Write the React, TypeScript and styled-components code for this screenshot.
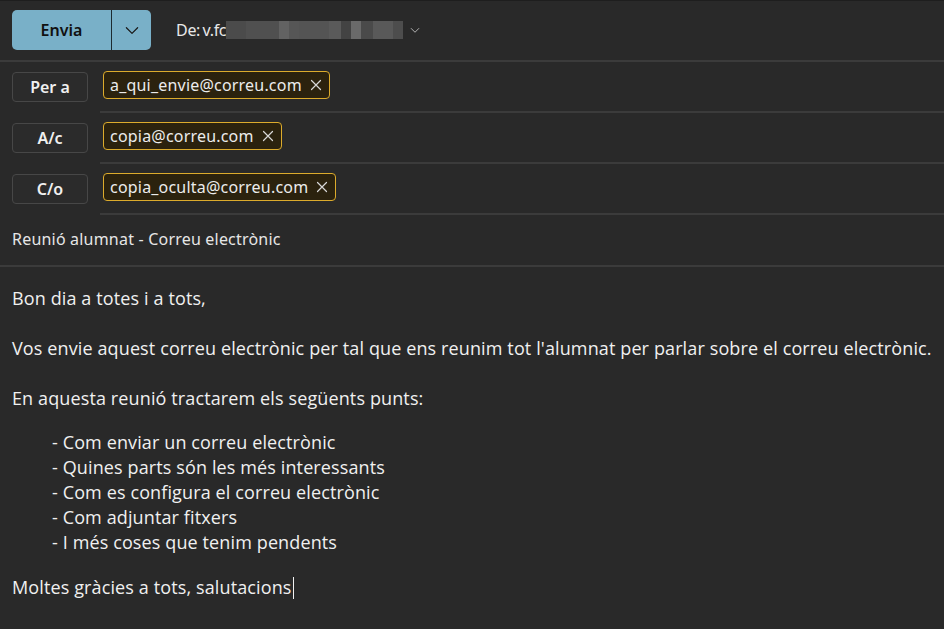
import { createGlobalStyle, styled } from 'styled-components';

const GlobalStyle = createGlobalStyle`
  html, body {
    margin: 0;
    padding: 0;
    background: #292929;
  }
  * {
    box-sizing: border-box;
  }
`;

const HEAD_FONT = `"Noto Sans", "Open Sans", sans-serif`;
const BODY_FONT = `"Open Sans", "Noto Sans", sans-serif`;

const Window = styled.main`
  width: 944px;
  height: 629px;
  overflow: hidden;
  background: #292929;
  border-top: 1px solid #1e1e1e;
  color: #e6e6e6;
  font-family: ${HEAD_FONT};
`;

const Toolbar = styled.header`
  height: 61px;
  display: flex;
  align-items: center;
  gap: 25px;
  padding: 0 12px 1px;
  border-bottom: 2px solid #3b3b3b;
`;

const SendGroup = styled.div`
  display: flex;
  height: 40px;
  border-radius: 5px;
  overflow: hidden;
  background: #79b0c8;
`;

const SendButton = styled.button`
  width: 99px;
  border: 0;
  background: transparent;
  color: #111;
  font-family: ${HEAD_FONT};
  font-size: 16px;
  font-weight: 600;
  padding: 0;
`;

const SendMenu = styled.button`
  width: 40px;
  border: 0;
  border-left: 1px solid #1c2a30;
  background: transparent;
  display: flex;
  align-items: center;
  justify-content: center;
  padding: 0;
`;

const From = styled.div`
  display: flex;
  align-items: center;
  font-size: 16px;
  color: #e8e8e8;
  letter-spacing: -0.3px;
`;

const Redacted = styled.span`
  display: flex;
  height: 18px;
  margin-right: 6px;
`;

const Block = styled.span<{ $w: number; $c: string }>`
  width: ${(p) => p.$w}px;
  background: ${(p) => p.$c};
`;

const Row = styled.div`
  display: flex;
  align-items: center;
  height: 51px;
  padding-left: 12px;
`;

const Field = styled.div`
  flex: 1;
  height: 100%;
  display: flex;
  align-items: center;
  margin-left: 12px;
  border-bottom: 2px solid #3b3b3b;
`;

const RecipientLabel = styled.button`
  width: 76px;
  height: 30px;
  margin-top: -2px;
  border: 1px solid #474747;
  border-radius: 4px;
  background: #2b2b2b;
  color: #f0f0f0;
  font-family: ${HEAD_FONT};
  font-size: 16px;
  font-weight: 600;
  padding: 0;
`;

const Chip = styled.span`
  display: inline-flex;
  align-items: center;
  gap: 8px;
  height: 28px;
  margin-left: 3px;
  margin-top: -4px;
  padding: 0 7px 0 6px;
  border: 1px solid #dcab2c;
  border-radius: 4px;
  background: #2b220e;
  color: #ececec;
  font-size: 16px;
  letter-spacing: 0.2px;
`;

const Subject = styled.div`
  height: 52px;
  display: flex;
  align-items: center;
  padding: 0 12px 2px;
  border-bottom: 2px solid #3b3b3b;
  font-size: 16px;
  color: #e6e6e6;
  letter-spacing: 0.2px;
`;

const Body = styled.section`
  padding: 19px 12px 0;
  font-family: ${BODY_FONT};
  font-size: 18px;
  line-height: 25px;
  color: #f0f0f0;
  letter-spacing: 0.12px;
  white-space: nowrap;
`;

const Paragraph = styled.p`
  margin: 0 0 25px;
`;

const List = styled.ul`
  list-style: none;
  margin: -6px 0 20px;
  padding-left: 40px;
`;

const Caret = styled.span`
  display: inline-block;
  width: 1px;
  height: 22px;
  margin-left: 1px;
  vertical-align: -5px;
  background: #f0f0f0;
`;

const Chevron = ({ size, color }: { size: number; color: string }) => (
  <svg width={size} height={size} viewBox="0 0 16 16" fill="none">
    <path d="M3 6l5 5 5-5" stroke={color} strokeWidth="1.1" strokeLinecap="round" strokeLinejoin="round" />
  </svg>
);

const Dismiss = () => (
  <svg width="12" height="12" viewBox="0 0 12 12" fill="none">
    <path d="M1.5 1.5l9 9M10.5 1.5l-9 9" stroke="#d8d8d8" strokeWidth="1.2" strokeLinecap="round" />
  </svg>
);

const BLOCKS: [number, string][] = [
  [20, '#4b4b4b'],
  [33, '#505050'],
  [10, '#626262'],
  [10, '#565656'],
  [30, '#545454'],
  [12, '#5a5a5a'],
  [10, '#434343'],
  [10, '#6a6a6a'],
  [12, '#4a4a4a'],
  [20, '#595959'],
  [10, '#4d4d4d'],
];

const RECIPIENTS = [
  { label: 'Per a', email: 'a_qui_envie@correu.com' },
  { label: 'A/c', email: 'copia@correu.com' },
  { label: 'C/o', email: 'copia_oculta@correu.com' },
];

const POINTS = [
  '- Com enviar un correu electrònic',
  '- Quines parts són les més interessants',
  '- Com es configura el correu electrònic',
  '- Com adjuntar fitxers',
  '- I més coses que tenim pendents',
];

export default function App() {
  return (
    <>
      <GlobalStyle />
      <Window>
        <Toolbar>
          <SendGroup>
            <SendButton>Envia</SendButton>
            <SendMenu>
              <Chevron size={18} color="#1a1a1a" />
            </SendMenu>
          </SendGroup>
          <From>
            De:{'\u2009'}v.fc
            <Redacted>
              {BLOCKS.map(([w, c], i) => (
                <Block key={i} $w={w} $c={c} />
              ))}
            </Redacted>
            <Chevron size={12} color="#cfcfcf" />
          </From>
        </Toolbar>
        {RECIPIENTS.map((r) => (
          <Row key={r.label}>
            <RecipientLabel>{r.label}</RecipientLabel>
            <Field>
              <Chip>
                {r.email}
                <Dismiss />
              </Chip>
            </Field>
          </Row>
        ))}
        <Subject>Reunió alumnat - Correu electrònic</Subject>
        <Body>
          <Paragraph>Bon dia a totes i a tots,</Paragraph>
          <Paragraph>
            Vos envie aquest correu electrònic per tal que ens reunim tot l'alumnat per parlar sobre el correu
            electrònic.
          </Paragraph>
          <Paragraph>En aquesta reunió tractarem els següents punts:</Paragraph>
          <List>
            {POINTS.map((p) => (
              <li key={p}>{p}</li>
            ))}
          </List>
          <Paragraph>
            Moltes gràcies a tots, salutacions
            <Caret />
          </Paragraph>
        </Body>
      </Window>
    </>
  );
}
